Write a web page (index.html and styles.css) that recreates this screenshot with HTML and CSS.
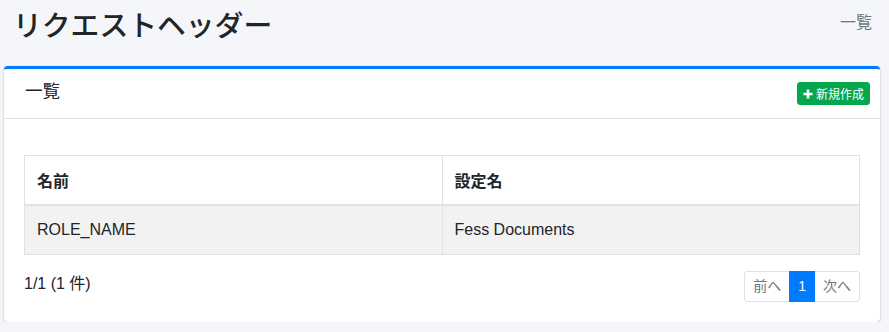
FILE: index.html
```html
<!DOCTYPE html>
<html lang="ja">
<head>
<meta charset="utf-8">
<title>リクエストヘッダー</title>
<link rel="stylesheet" href="styles.css">
</head>
<body>
<div class="content-header">
  <h1 class="page-title">リクエストヘッダー</h1>
  <ol class="breadcrumb"><li>一覧</li></ol>
</div>
<div class="card">
  <div class="card-header">
    <h3 class="card-title">一覧</h3>
    <a class="btn-create" href="#"><svg class="plus" width="10" height="10" viewBox="0 0 10 10"><path d="M5 0.5V9.5M0.5 5H9.5" stroke="#fff" stroke-width="2.6"/></svg>新規作成</a>
  </div>
  <div class="card-body">
    <table class="table">
      <thead>
        <tr><th>名前</th><th>設定名</th></tr>
      </thead>
      <tbody>
        <tr><td>ROLE_NAME</td><td>Fess Documents</td></tr>
      </tbody>
    </table>
    <div class="list-footer">
      <span class="count">1/1 (1 件)</span>
      <ul class="pagination">
        <li class="page disabled">前へ</li>
        <li class="page active">1</li>
        <li class="page disabled">次へ</li>
      </ul>
    </div>
  </div>
</div>
</body>
</html>
```
FILE: styles.css
```css
* { box-sizing: border-box; }
html, body { margin: 0; padding: 0; }
body {
  background: #f4f6f9;
  font-family: "Liberation Sans", "Noto Sans CJK JP", sans-serif;
  font-size: 16px;
  line-height: 1.5;
  color: #212529;
}
.content-header {
  display: flex;
  justify-content: space-between;
  align-items: flex-start;
  padding: 7px 17px 0 13px;
  height: 66px;
}
.page-title {
  margin: 0;
  font-size: 28.8px;
  font-weight: 500;
  line-height: 1.2;
  font-family: "Noto Sans CJK JP", sans-serif;
}
.breadcrumb {
  list-style: none;
  margin: 0;
  padding: 2px 0 0;
  color: #6c757d;
  font-family: "Noto Sans CJK JP", sans-serif;
  font-size: 16px;
  line-height: 24px;
}
.card {
  margin-left: 4px;
  width: 876px;
  background: #fff;
  border-top: 3px solid #007bff;
  border-radius: 4px;
  box-shadow: 0 0 1px rgba(0,0,0,.125), 0 1px 3px rgba(0,0,0,.2);
}
.card-header {
  display: flex;
  justify-content: space-between;
  align-items: center;
  padding: 10px 10px 12px 21px;
  border-bottom: 1px solid #dee2e6;
  height: 50px;
}
.card-title {
  align-self: flex-start;
  margin: 0;
  font-size: 17.6px;
  font-weight: 400;
  line-height: 1.2;
  font-family: "Noto Sans CJK JP", sans-serif;
}
.btn-create {
  display: inline-flex;
  align-items: center;
  gap: 3px;
  margin-top: 2px;
  background: #04a64e;
  border: 1px solid #04a64e;
  color: #fff;
  text-decoration: none;
  font-size: 12px;
  line-height: 17px;
  padding: 2px 5px;
  border-radius: 3px;
  font-family: "Noto Sans CJK JP", sans-serif;
}
.plus { display: block; }
.card-body {
  padding: 36px 20px 20px;
}
.table {
  width: 100%;
  border-collapse: collapse;
  border: 1px solid #dee2e6;
  table-layout: fixed;
  margin-bottom: 16px;
}
.table th, .table td {
  border: 1px solid #dee2e6;
  padding: 12px;
  text-align: left;
  line-height: 24px;
}
.table th {
  font-weight: 700;
  border-bottom-width: 2px;
  font-family: "Noto Sans CJK JP", sans-serif;
}
.table tbody tr { background: #f2f2f2; }
.list-footer {
  display: flex;
  justify-content: space-between;
  align-items: flex-start;
}
.count { padding-top: 1px; }
.pagination {
  display: flex;
  list-style: none;
  margin: 0;
  padding: 0;
  font-size: 14px;
  line-height: 21px;
}
.page {
  padding: 4px 8px;
  border: 1px solid #dee2e6;
  margin-left: -1px;
  color: #6c757d;
  background: #fff;
  font-family: "Liberation Sans", "Noto Sans CJK JP", sans-serif;
}
.page:first-child { border-radius: 3px 0 0 3px; margin-left: 0; }
.page:last-child { border-radius: 0 3px 3px 0; }
.page.active {
  background: #007bff;
  border-color: #007bff;
  color: #fff;
  position: relative;
  z-index: 1;
}
```
